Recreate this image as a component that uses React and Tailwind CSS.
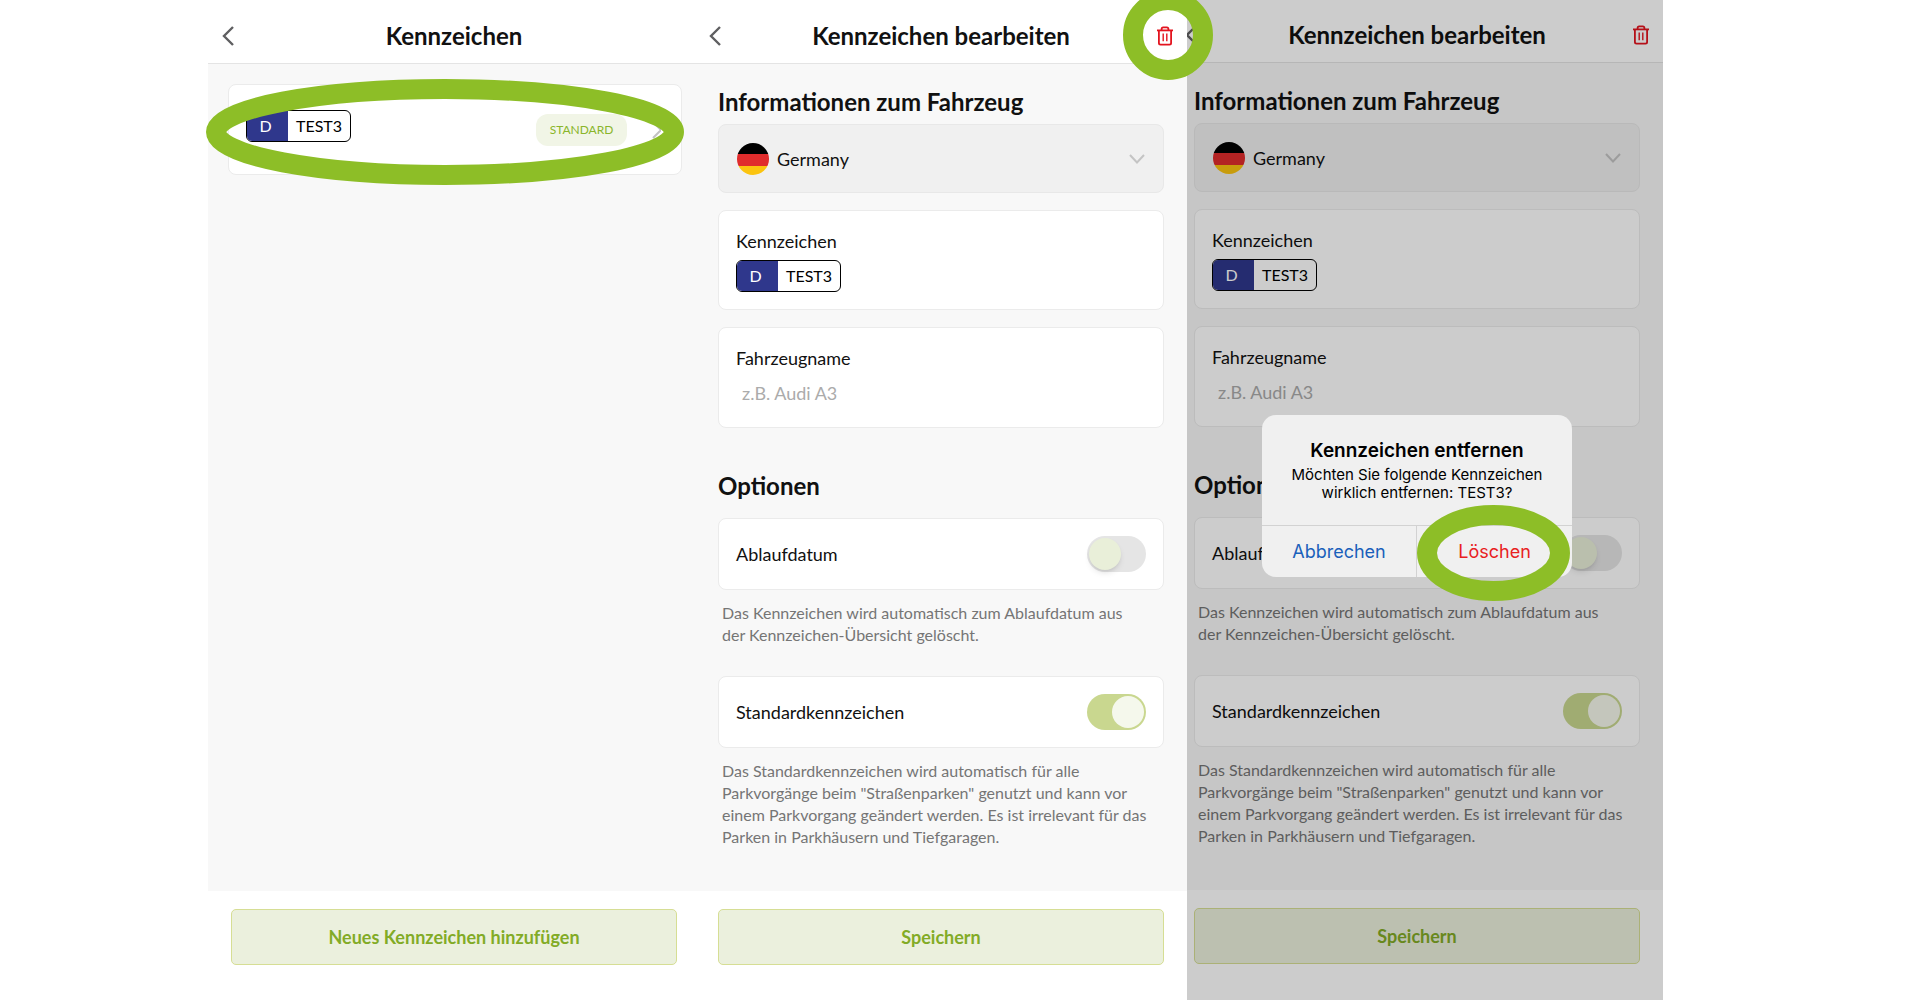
import { useState } from "react";

function BackIcon() {
  return (
    <svg width="12" height="20" viewBox="0 0 12 20" fill="none" stroke="#5f5f61" strokeWidth="2.4">
      <path d="M11 1 L2 10 L11 19" />
    </svg>
  );
}

function TrashIcon() {
  return (
    <svg width="16" height="20" viewBox="0 0 16 20" fill="none" stroke="#e3141f" strokeWidth="1.8">
      <path d="M0 4.4 H16" />
      <path d="M4.6 4.2 V3 Q4.6 1.4 6.2 1.4 H9.8 Q11.4 1.4 11.4 3 V4.2" />
      <path d="M1.9 4.6 V17 Q1.9 18.6 3.5 18.6 H12.5 Q14.1 18.6 14.1 17 V4.6" />
      <path d="M6.2 7.5 V15.2 M9.8 7.5 V15.2" strokeWidth="1.4" />
    </svg>
  );
}

function GermanFlag() {
  return (
    <svg width="32" height="32" viewBox="0 0 32 32" className="shrink-0">
      <clipPath id="flag-round">
        <circle cx="16" cy="16" r="16" />
      </clipPath>
      <g clipPath="url(#flag-round)">
        <rect width="32" height="11" fill="#000" />
        <rect y="11" width="32" height="12" fill="#e02c2c" />
        <rect y="23" width="32" height="9" fill="#fbc40f" />
      </g>
    </svg>
  );
}

// ================= PLATE =================
function Plate({ country, number }) {
  return (
    <div className="inline-flex h-8 w-[105px] overflow-hidden rounded-md border border-black bg-white text-base">
      <span className="flex w-[41px] items-center justify-center bg-[#2f378c] pr-1 text-white">{country}</span>
      <span className="flex flex-1 items-center justify-center text-black">{number}</span>
    </div>
  );
}

// ================= HEADER =================
function Header({ title, withDelete }) {
  return (
    <header className="flex h-16 items-center border-b border-[#e4e4e4] bg-white pt-2">
      <button aria-label="Zurück" className="flex w-14 pl-3.5">
        <BackIcon />
      </button>
      <h1 className="flex-1 text-center text-2xl font-bold text-[#111]">{title}</h1>
      <div className="flex w-14 justify-end pr-3.5">
        {withDelete && (
          <button aria-label="Kennzeichen löschen">
            <TrashIcon />
          </button>
        )}
      </div>
    </header>
  );
}

function Footer({ label }) {
  return (
    <footer className="bg-white px-[23px] pt-[18px] pb-[35px]">
      <button className="h-14 w-full rounded-[5px] border border-[#d6de94] bg-[#ebf0dd] text-lg font-bold text-[#82ab26]">
        {label}
      </button>
    </footer>
  );
}

function Toggle({ id, label, defaultChecked }) {
  return (
    <div className="flex h-[72px] items-center justify-between rounded-lg border border-[#ebebeb] bg-white px-[17px]">
      <label htmlFor={id} className="text-lg text-[#111]">
        {label}
      </label>
      <input
        id={id}
        type="checkbox"
        role="switch"
        defaultChecked={defaultChecked}
        className="h-9 w-[59px] appearance-none rounded-full bg-[#e5e5e5] p-0.5 before:block before:size-8 before:rounded-full before:bg-[#e9efd9] before:shadow-md checked:bg-[#c9d78f] checked:pl-[25px] checked:before:bg-[#f5f8ec] checked:before:shadow-none"
      />
    </div>
  );
}

// ================= LIST SCREEN =================
function PlateList() {
  return (
    <div className="-mr-[5px] flex min-h-screen flex-col">
      <Header title="Kennzeichen" />
      <main className="flex-1 bg-[#f8f8f8] pt-5 pr-[18px] pl-5">
        <button className="flex h-[91px] w-full items-center rounded-lg border border-[#ebebeb] bg-white pr-5 pl-[17px]">
          <div className="flex flex-1 pb-2">
            <Plate country="D" number="TEST3" />
          </div>
          <span className="flex h-8 w-[91px] items-center justify-center rounded-xl bg-[#f1f5e6] text-xs text-[#8ab52b]">
            STANDARD
          </span>
          <svg width="34" height="18" viewBox="0 0 34 18" fill="none" stroke="#c2c2c2" strokeWidth="2">
            <path d="M26 1 L34 9 L26 17" />
          </svg>
        </button>
      </main>
      <Footer label="Neues Kennzeichen hinzufügen" />
    </div>
  );
}

// ================= EDIT SCREEN =================
function EditPlate({ name, className }) {
  const [vehicle, setVehicle] = useState("");

  return (
    <div className={`flex min-h-screen flex-col ${className || ""}`}>
      <Header title="Kennzeichen bearbeiten" withDelete />
      <main className="flex-1 bg-[#f8f8f8] px-[23px] pt-6">
        <h2 className="mb-2 text-2xl leading-7 font-bold text-[#111]">Informationen zum Fahrzeug</h2>
        <div className="flex h-[69px] items-center rounded-lg border border-[#e8e8e8] bg-[#f0f0f0] px-[18px]">
          <GermanFlag />
          <select
            aria-label="Land"
            className="flex-1 appearance-none bg-transparent pl-2 text-lg text-[#111]"
            defaultValue="DE"
          >
            <option value="DE">Germany</option>
          </select>
          <svg width="16" height="10" viewBox="0 0 16 10" fill="none" stroke="#c4c4c4" strokeWidth="2">
            <path d="M1 1 L8 8.5 L15 1" />
          </svg>
        </div>

        <div className="mt-[17px] h-[100px] rounded-lg border border-[#ebebeb] bg-white px-[17px] pt-[18px]">
          <p className="mb-[7px] text-lg leading-6 text-[#111]">Kennzeichen</p>
          <Plate country="D" number="TEST3" />
        </div>

        <div className="mt-[17px] h-[101px] rounded-lg border border-[#ebebeb] bg-white px-[17px] pt-[18px]">
          <label htmlFor={`${name}-vehicle`} className="mb-[11px] block text-lg leading-6 text-[#111]">
            Fahrzeugname
          </label>
          <input
            id={`${name}-vehicle`}
            value={vehicle}
            onChange={(e) => setVehicle(e.target.value)}
            placeholder="z.B. Audi A3"
            className="block w-full bg-transparent px-1.5 text-lg leading-6 outline-none placeholder:text-[#ababab]"
          />
        </div>

        <h2 className="mt-11 mb-[18px] text-2xl leading-7 font-bold text-[#111]">Optionen</h2>
        <Toggle id={`${name}-expiry`} label="Ablaufdatum" />
        <p className="mt-3 pl-1 leading-[22px] text-[#757575]">
          Das Kennzeichen wird automatisch zum Ablaufdatum aus
          <br />
          der Kennzeichen-Übersicht gelöscht.
        </p>
        <div className="mt-[30px]">
          <Toggle id={`${name}-default`} label="Standardkennzeichen" defaultChecked />
        </div>
        <p className="mt-3 pl-1 leading-[22px] text-[#757575]">
          Das Standardkennzeichen wird automatisch für alle
          <br />
          Parkvorgänge beim "Straßenparken" genutzt und kann vor
          <br />
          einem Parkvorgang geändert werden. Es ist irrelevant für das
          <br />
          Parken in Parkhäusern und Tiefgaragen.
        </p>
      </main>
      <Footer label="Speichern" />
    </div>
  );
}

// ================= DELETE DIALOG =================
function DeleteDialog() {
  return (
    <div className="absolute inset-0 flex items-start justify-center bg-black/20 pr-4 pt-[415px] font-[Inter,sans-serif]">
      <div role="dialog" aria-label="Kennzeichen entfernen" className="relative w-[310px] rounded-[14px] bg-[#f0f0f0] text-center text-black">
        <div className="h-[111px] border-b border-[#d2d2d2] pt-6">
          <h3 className="mb-[3px] text-[19px] leading-6 font-semibold">Kennzeichen entfernen</h3>
          <p className="text-[15px] leading-[18px]">
            Möchten Sie folgende Kennzeichen
            <br />
            wirklich entfernen: TEST3?
          </p>
        </div>
        <div className="grid h-[51px] grid-cols-2 text-lg">
          <button className="border-r border-[#d2d2d2] text-[#1a60bb]">Abbrechen</button>
          <button className="text-[#e8211f]">Löschen</button>
        </div>
        <svg className="absolute top-[90px] left-[155px]" width="153" height="96" viewBox="0 0 153 96" fill="none">
          <ellipse cx="76.5" cy="48" rx="66.5" ry="38" stroke="#8dbe27" strokeWidth="20" />
        </svg>
      </div>
    </div>
  );
}

export default function App() {
  return (
    <div className="flex min-h-screen bg-white font-[Lato,sans-serif]">
      <div className="flex-[208]"></div>
      <section className="relative min-w-0 flex-[487]">
        <PlateList />
        <svg className="pointer-events-none absolute top-[79px] -left-0.5 z-10" width="478" height="106" viewBox="0 0 478 106" fill="none">
          <ellipse cx="239" cy="53" rx="229" ry="43" stroke="#8dbe27" strokeWidth="20" />
        </svg>
      </section>
      <section className="relative z-10 min-w-0 flex-[492]">
        <EditPlate name="edit" />
        <svg className="pointer-events-none absolute -top-2.5 -right-[26px]" width="90" height="90" viewBox="0 0 90 90" fill="none">
          <circle cx="45" cy="45" r="35" stroke="#8dbe27" strokeWidth="20" />
        </svg>
      </section>
      <section className="relative min-w-0 flex-[476] overflow-hidden">
        <EditPlate name="remove" className="-mt-px -ml-4" />
        <DeleteDialog />
      </section>
      <div className="flex-[251]"></div>
    </div>
  );
}
